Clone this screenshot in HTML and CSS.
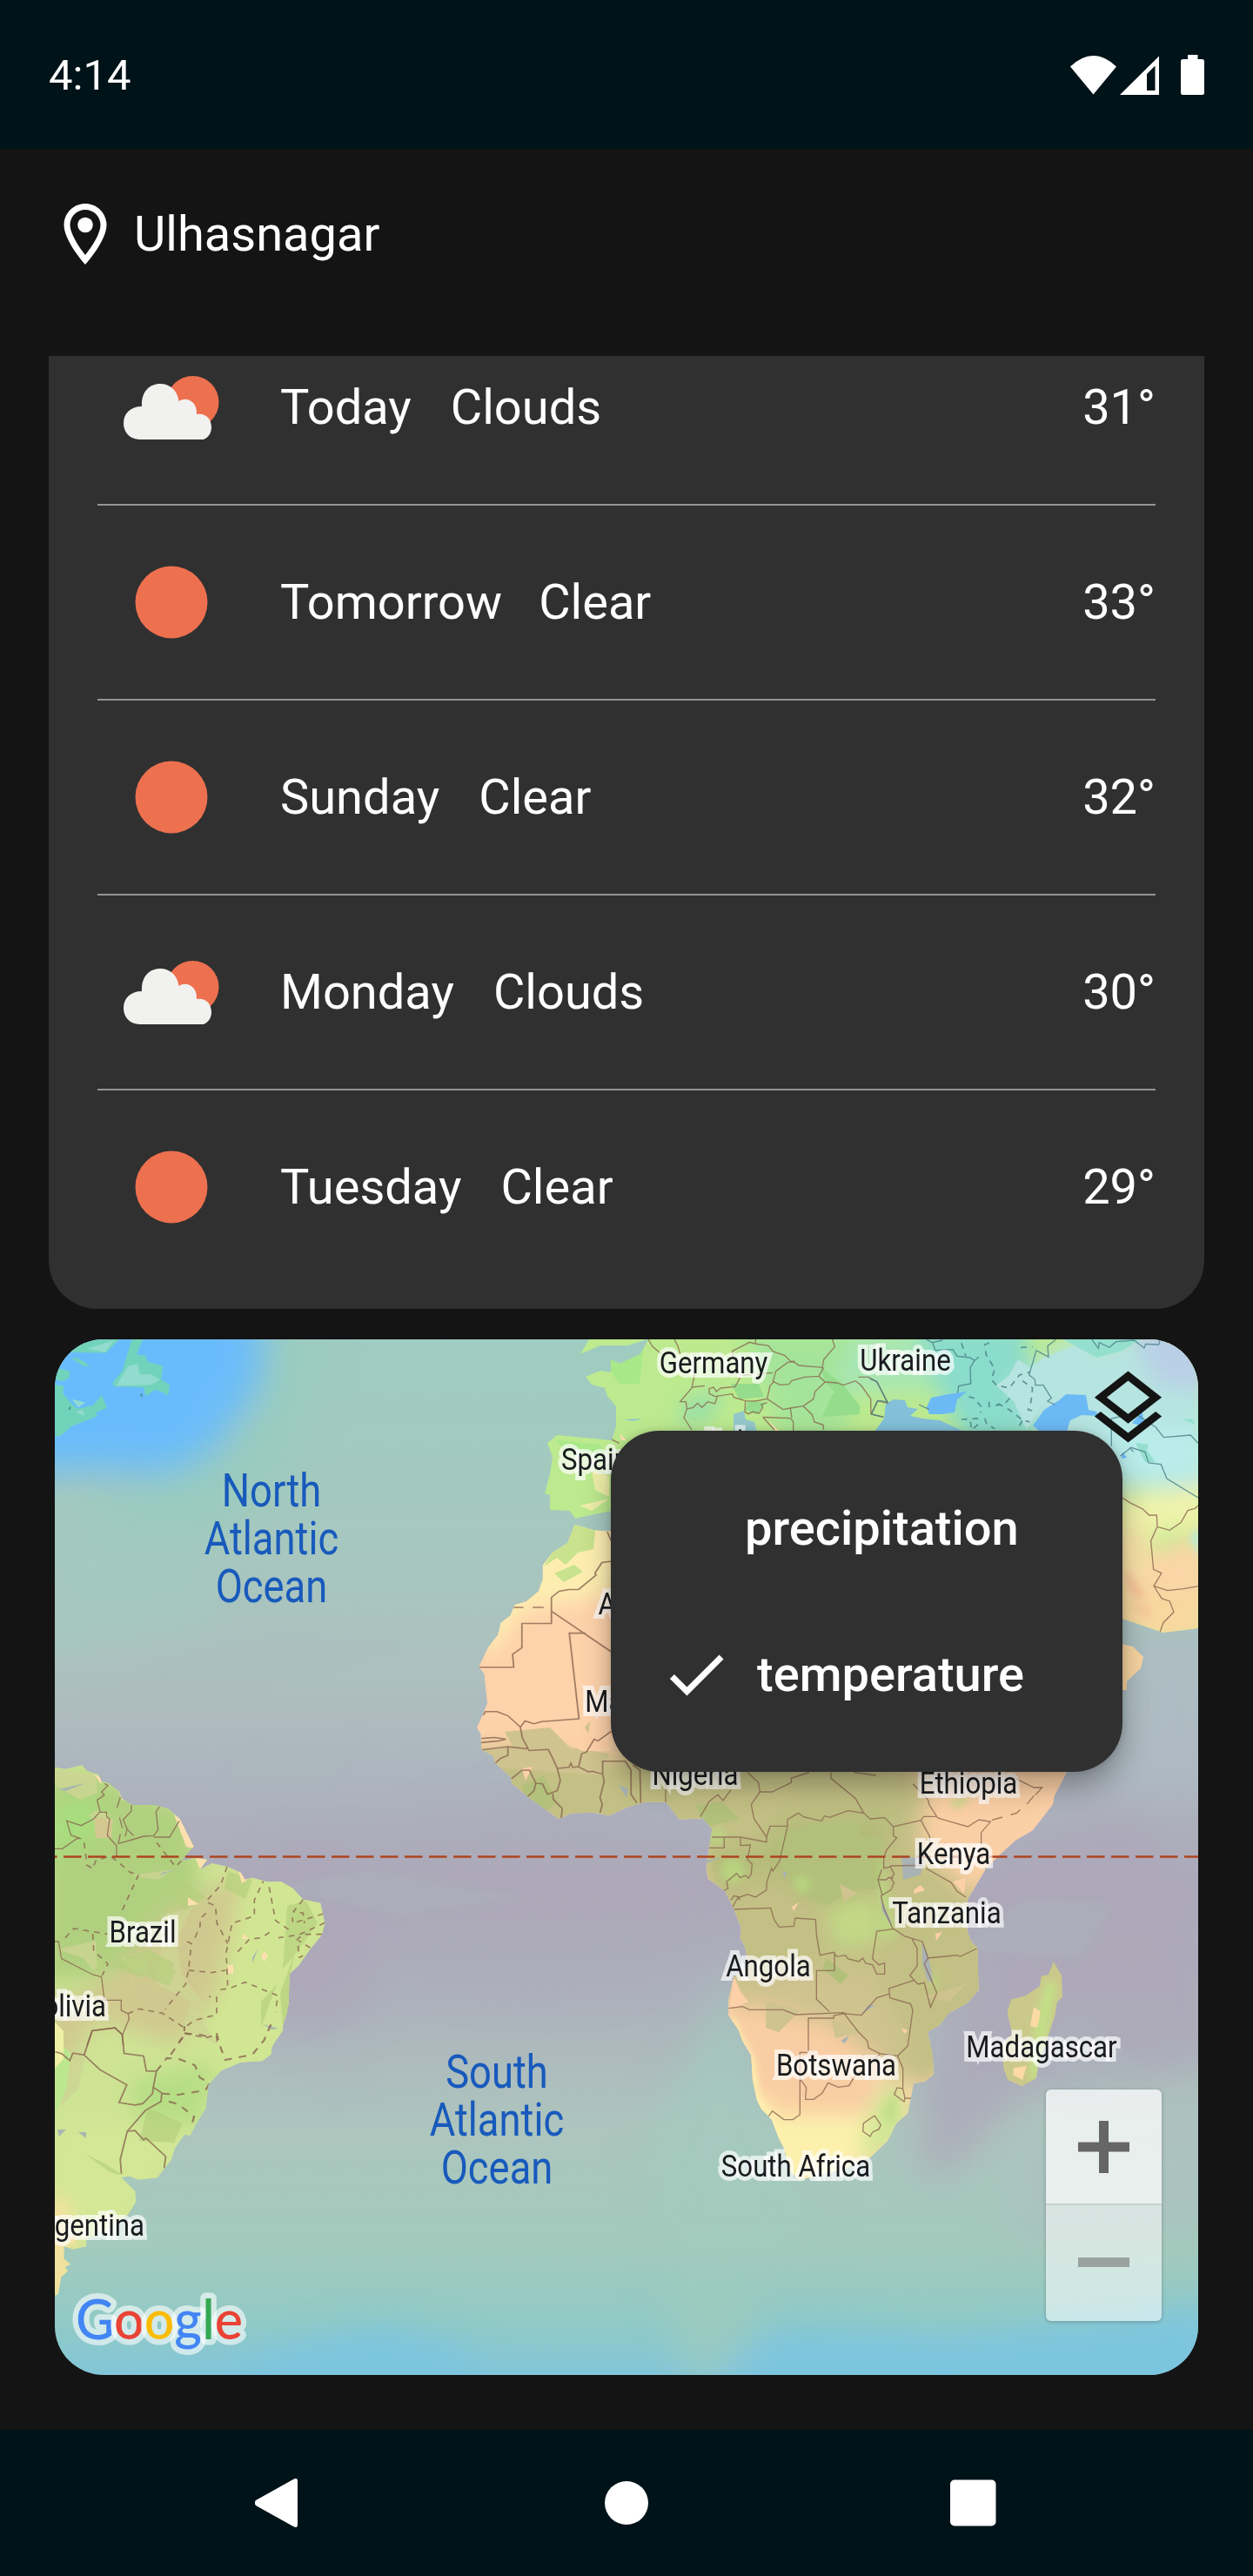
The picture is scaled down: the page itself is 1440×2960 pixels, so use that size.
FILE: index.html
```html
<!DOCTYPE html>
<html lang="en">
<head>
<meta charset="utf-8">
<title>Weather</title>
<link rel="stylesheet" href="styles.css">
</head>
<body>
<div class="screen">
  <header class="status-bar">
    <span class="clock">4:14</span>
    <svg class="status-icons" width="154" height="46" viewBox="1230 62 154 46">
      <path d="M1230 75.5Q1256.500 50.500 1283 75.500L1256.500 107.500Z"/>
      <path fill-rule="evenodd" d="M1287 108L1332 63.500V108ZM1318 84V103H1327.500V74.500Z"/>
      <path d="M1365 62H1376.500V67H1381.500Q1384 67 1384 69.500V105.500Q1384 108 1381.500 108H1359.500Q1357 108 1357 105.500V69.500Q1357 67 1359.500 67H1365Z"/>
    </svg>
  </header>

  <main class="content">
    <div class="location">
      <svg width="84" height="84" viewBox="0 0 24 24"><path d="M12 2C8.130 2 5 5.130 5 9c0 5.250 7 13 7 13s7-7.750 7-13c0-3.870-3.130-7-7-7zM7 9c0-2.760 2.240-5 5-5s5 2.240 5 5c0 2.880-2.880 7.190-5 9.880C9.920 16.210 7 11.850 7 9z"/><circle cx="12" cy="9" r="2.500"/></svg>
      <span>Ulhasnagar</span>
    </div>

    <section class="forecast">
      <ul class="days">
        <li class="day"><svg class="wx" viewBox="0 0 168 120"><use href="#cloudy"/></svg><span class="name wide">Today</span><span>Clouds</span><span class="temp">31°</span></li>
        <li class="day"><svg class="wx" viewBox="0 0 168 120"><use href="#sunny"/></svg><span class="name">Tomorrow</span><span>Clear</span><span class="temp">33°</span></li>
        <li class="day"><svg class="wx" viewBox="0 0 168 120"><use href="#sunny"/></svg><span class="name wide">Sunday</span><span>Clear</span><span class="temp">32°</span></li>
        <li class="day"><svg class="wx" viewBox="0 0 168 120"><use href="#cloudy"/></svg><span class="name wide">Monday</span><span>Clouds</span><span class="temp">30°</span></li>
        <li class="day"><svg class="wx" viewBox="0 0 168 120"><use href="#sunny"/></svg><span class="name wide">Tuesday</span><span>Clear</span><span class="temp">29°</span></li>
      </ul>
    </section>

    <section class="map-card">
      <svg class="map" viewBox="63 1539 1314 1190">
        <defs>
          <g id="sunny"><circle cx="85" cy="60" r="41.500" fill="#ed704f"/></g>
          <g id="cloudy">
            <circle cx="109.500" cy="54" r="30" fill="#ed704f"/>
            <path fill="#f1f1ef" d="M48 97C35 96 30 87 30 78.500C30 67 38 59 51 59C50 42 60 33 72 33C84 33 92 41 93.500 53C103 47 115 54 114 68C124 66 131 73 131 83C131 90 127 95 122 97Z"/>
          </g>
          <linearGradient id="sea" x1="0" y1="1539" x2="0" y2="2729" gradientUnits="userSpaceOnUse">
            <stop offset="0" stop-color="#9fccc0"/><stop offset=".18" stop-color="#a5c8bf"/><stop offset=".32" stop-color="#adc0bf"/>
            <stop offset=".42" stop-color="#adb5be"/><stop offset=".53" stop-color="#ada9ba"/><stop offset=".64" stop-color="#adb2bc"/>
            <stop offset=".76" stop-color="#adc5be"/><stop offset=".88" stop-color="#a2cabd"/><stop offset=".95" stop-color="#91cac6"/><stop offset="1" stop-color="#83c6d9"/>
          </linearGradient>
          <filter id="soft" x="-50%" y="-50%" width="200%" height="200%"><feGaussianBlur stdDeviation="22"/></filter>
          <filter id="mid" x="-50%" y="-50%" width="200%" height="200%"><feGaussianBlur stdDeviation="12"/></filter>
          <filter id="tight" x="-50%" y="-50%" width="200%" height="200%"><feGaussianBlur stdDeviation="4"/></filter>
          <clipPath id="africa">
            <path transform="translate(40 1520) scale(.4464 .3954)" d="M1390 587L1372 640 1332 668 1308 705V745L1297 780 1265 810 1235 820 1225 850 1200 872 1192 907 1168 942 1143 1000 1157 1020 1160 1055 1165 1105 1153 1140 1138 1176 1148 1195 1150 1240 1180 1258 1186 1280 1225 1320 1228 1338 1270 1378 1350 1442 1380 1425 1440 1423 1478 1432 1525 1408 1568 1393 1625 1393 1660 1443 1722 1440V620L1440 603Z"/>
            <path transform="translate(780 2030) scale(.3333)" d="M84 -100V177L115 215 105 280 95 350 100 385 160 430 190 490 215 555 212 590 230 625 240 690 190 725 172 800V858L205 905 220 945 250 995 255 1080 270 1150 285 1180 320 1215 345 1280 365 1320 380 1390 415 1425 500 1405 575 1385 660 1348 720 1290 750 1230 790 1195 810 1093 850 1085 880 1060 875 990 858 915 900 890 930 850 995 815 1034 770 1030 625 1010 605 995 570V460L1060 350 1100 310 1160 255 1220 220 1290 130 1295 100 1340 15V-100Z"/>
          </clipPath>
          <clipPath id="america">
            <path transform="translate(60 2010) scale(.3333)" d="M9 62L45 68 103 55 120 75 160 88 170 112 190 115 230 145 240 170 275 192H350L400 205 440 240 465 290 488 335 465 360 445 385 490 375 535 380 510 415 550 393 605 405 650 425 665 450 690 443 740 457H790L830 480 865 518 925 530 940 600 930 640 885 695 850 745 818 775 815 880 795 935V970L760 1020H9Z"/>
            <path transform="translate(40 2120) scale(.4464 .4082)" d="M52 200H400L650 365V470L635 520 610 570 608 590 585 608 530 612 480 635 447 675 440 742 415 785 400 818 385 815 360 855 352 885 315 937 265 942 245 932 222 935 258 975 260 1005 240 1040 200 1080 133 1110 132 1130 100 1138 75 1130V1165L92 1180 78 1188 85 1200 68 1215 60 1265 52 1268Z"/>
          </clipPath>
          <clipPath id="europe">
            <path d="M667 1556L677 1539H744L722 1546H690Z"/>
            <path d="M745 1539L736 1556 712 1567 702 1562V1577L690 1575 673 1582 680 1591 695 1595 698 1604 708 1616V1639L703 1655 640 1649 629 1658 635 1674 632 1694 626 1716 632 1718V1735L655 1736 661 1745 683 1740 710 1735V1860H1290L1337 1876 1377 1871V1539Z"/>
          </clipPath>
          <clipPath id="madagascar">
            <path transform="translate(780 2030) scale(.3333)" d="M1293 672L1308 700 1320 720 1323 795 1305 810 1297 860 1270 940 1240 1030 1232 1075 1183 1102 1135 1080 1120 1040 1115 960 1150 920 1133 850 1140 820 1148 802 1195 790 1245 757 1250 722 1275 717Z"/>
          </clipPath>
        </defs>

        <!-- ocean temperature -->
        <rect x="63" y="1539" width="1314" height="1190" fill="url(#sea)"/>
        <g filter="url(#soft)">
          <path fill="#69bcfb" d="M-20 1460H290Q315 1560 290 1610Q265 1630 250 1670Q225 1710 150 1690H-20Z"/>
          <path fill="#94cdbd" opacity=".6" d="M90 1740L280 1640 320 1520 370 1540 330 1700 200 1790 100 1800Z"/>
          <path fill="#a4c9bf" opacity=".8" d="M40 1740L260 1780 240 1860 40 1900Z"/>
          <path fill="#aebcc4" opacity=".7" d="M1290 1880H1400V2060H1280Z"/>
          <ellipse cx="360" cy="2230" rx="80" ry="110" fill="#ada8b9" opacity=".8"/>
          <ellipse cx="620" cy="2180" rx="220" ry="110" fill="#ada8b9" opacity=".4"/>
          <path fill="#ada7b9" opacity=".8" d="M1060 2400L1160 2140 1300 2080 1400 2250V2370L1180 2400 1090 2500 1060 2500Z"/>
          <path fill="#adc0be" opacity=".6" d="M1160 2480L1400 2400V2560L1160 2580Z"/>
          <path fill="#a2cbbd" opacity=".7" d="M840 2260L890 2440 950 2580 780 2600 740 2480Z"/>
          <path fill="#7cc5df" d="M170 2780L330 2700 440 2675 530 2700 560 2760 700 2750 760 2760 900 2680 1100 2690 1400 2650V2800H170Z"/>
          <path fill="#9dcbbd" opacity=".8" d="M760 2620L800 2760 870 2680 850 2600Z"/>
        </g>
        <g filter="url(#tight)" fill="#acbabe" opacity=".3">
          <path d="M80 1960L180 1920 320 1880 460 1890 300 1940Z"/><path d="M240 2060L300 2000 420 1990 380 2050Z"/>
          <path d="M300 2170L420 2150 600 2180 460 2200Z"/><path d="M320 2360L400 2330 440 2410 380 2430Z"/>
          <path d="M1100 2240L1180 2180 1280 2190 1240 2250Z"/><path d="M1190 2350L1240 2310 1320 2380 1250 2430Z"/>
        </g>

        <!-- Newfoundland and Nova Scotia -->
        <g transform="translate(40 1520) scale(.4464 .3954)">
          <path fill="#72d3bb" d="M72 85L95 48H218L183 87ZM250 48H278L262 92 285 95 290 113 330 125 325 165 347 180 343 212 325 200 310 195 285 213 280 187 205 185 200 175 225 140ZM90 100L115 105 143 127 125 125ZM52 130L90 140 88 160 70 170 52 165ZM52 180L75 183 72 205 95 235 110 250 150 240 172 210 186 248 155 262 163 270 95 300 65 330 52 330Z"/>
          <path fill="#92dccf" d="M135 75L205 50 180 86ZM240 125L265 120 270 150 300 150 322 165 300 180 210 183ZM95 222L130 232 112 245ZM105 260L122 252 128 270Z"/>
          <path d="M92 244L88 252M274 206L275 215" stroke="#4b8c86" stroke-width="4"/>
        </g>

        <!-- South America -->
        <g clip-path="url(#america)">
          <rect x="60" y="2020" width="330" height="640" fill="#cee394"/>
          <g filter="url(#mid)">
            <path fill="#b0d07f" d="M50 2040L110 2040 220 2080 230 2170 180 2260 50 2280Z"/>
            <path fill="#a8dd7e" d="M50 2080L100 2060 130 2100 60 2140Z"/>
            <path fill="#d0c98f" d="M190 2200L280 2150 280 2260 200 2350 110 2320 60 2400 50 2310 130 2270Z"/>
            <path fill="#d1e693" d="M280 2150H380L330 2380 230 2390Z"/>
            <path fill="#b5de85" d="M150 2390L250 2370 230 2440 160 2450Z"/>
            <path fill="#d3e796" d="M60 2440L220 2440 140 2570 60 2570Z"/>
            <path fill="#fae1a0" d="M50 2520L78 2530 84 2560 80 2650 50 2650Z"/>
          </g>
          <path fill="#cdd493" opacity=".8" d="M60 2032L110 2040 112 2060 92 2068 60 2050ZM120 2100L126 2084 145 2092 110 2080 102 2086ZM150 2155L200 2148 182 2160ZM66 2240L110 2230 112 2270 96 2250ZM140 2250L168 2252 172 2270 150 2262ZM190 2200L222 2190 202 2230 210 2270 240 2310 180 2280ZM220 2300L250 2350 210 2330ZM70 2360L100 2350 90 2400 70 2420Z"/>
          <path fill="#d3c890" d="M108 2088L130 2090 128 2112H110Z"/>
          <path fill="#b3cf7c" opacity=".65" d="M192 2168L212 2162 236 2180 212 2196ZM262 2150L290 2160 282 2182 258 2170ZM180 2260L202 2264 194 2282 170 2272ZM100 2270L170 2240 200 2256 195 2268 160 2272 120 2254ZM330 2190L352 2184 365 2210 340 2245 325 2262ZM340 2240L322 2290 326 2340 334 2300V2266ZM170 2422L210 2440 200 2462 160 2460ZM300 2300L318 2280 300 2330ZM98 2475L120 2486 142 2500 126 2496Z"/>
          <path fill="#fee0b0" d="M108 2038L118 2044 116 2050ZM136 2058L150 2070 140 2068ZM200 2085L210 2092 220 2115 224 2124 214 2122ZM274 2150L286 2159 278 2164ZM222 2128L238 2136 230 2148ZM262 2258H268V2268H262ZM304 2242L308 2248 304 2254 300 2248ZM216 2180L228 2188 216 2190ZM280 2222L286 2228 278 2228ZM329 2282L322 2290ZM80 2568L88 2572 82 2578Z"/>
          <path fill="#a8b7b0" d="M67 2056L98 2049 76 2058ZM297 2238L290 2250V2256ZM186 2152L202 2148 184 2155ZM66 2447H76L68 2455ZM90 2450H99V2457ZM302 2326L320 2331 312 2332Z"/>
          <path fill="#bde78f" d="M60 2340L82 2360 76 2400 64 2430Z"/><path fill="#eef0a5" d="M60 2320L73 2334V2366L60 2380Z"/>
          <g transform="translate(60 2010) scale(.3333)" class="border">
            <path d="M180 118L192 125 170 148 180 158 155 175 165 215 143 240 100 263 50 247 65 297 100 308 85 308 35 343H9M165 217H187L188 233 198 240 190 297 222 333V370M235 165L223 202M273 192V213L245 243 258 275 252 300M258 275L280 298M232 235L242 272M235 292L228 325 275 312 315 300 350 298 365 278 358 215 370 198M350 303H405L438 247M9 663L22 663 32 722 140 777 170 785 180 865H238V900L262 912 265 930 242 985 217 960 137 970 120 1020M242 985L245 1020"/>
            <path class="dash" d="M110 322L120 400 140 412 150 385 200 367 270 425 298 432 235 570M360 322L425 405 480 350M45 650L75 618 190 637M140 637L143 695 192 740 172 780M603 405L580 470 530 525 563 540 568 600 605 670M530 565L510 585V610L490 655M465 663L480 670 470 760 460 810 390 895M470 762L550 770 598 762M605 815L600 700 620 600 697 575V520L728 455M748 475L770 590 820 625M865 518L832 560 865 565 870 600M935 567L830 600 828 580M940 598L850 640 780 650M930 638H865L845 655 852 718 865 712M890 685L850 660M640 698L680 655 720 650 760 625M260 912L300 895 380 910 395 920 455 960 490 935 567 915V855L540 852M580 828L610 825 665 803 778 850 770 905M435 1012L460 980 530 995 565 985 570 1018"/>
          </g>
          <g transform="translate(40 2120) scale(.4464 .4082)" class="border">
            <path d="M52 582L70 588 90 607 98 586 127 591 148 523 206 515 225 533 230 587 280 594 287 636 313 637 305 682 327 698 325 722 285 747 238 806 220 885 223 925M127 591L168 633 237 675 217 725 258 732 278 728 303 700 305 682M238 806L258 804 280 830 286 825 337 877 333 910"/>
            <path class="dash" d="M313 637L340 600 370 602 412 620 425 655 450 670 440 690 370 703 327 700M345 722L370 730 410 765 405 785M350 590L385 535 385 510M468 530L475 560 490 605 560 590 590 550 610 500M385 530L430 535 450 542"/>
          </g>
        </g>

        <!-- Africa -->
        <g clip-path="url(#africa)">
          <rect x="540" y="1740" width="720" height="800" fill="#fed2ab"/>
          <g filter="url(#mid)">
            <path fill="#fdeeb0" d="M600 1740L720 1740V1830L600 1850 565 1900 540 1880Z"/>
            <path fill="#c3c085" d="M530 2012L600 2008 660 2020 700 2020 880 1990 1050 2030 1090 2110 1160 2180 1150 2340 1060 2400 1010 2370 960 2320 840 2310 800 2120 700 2120H560Z"/>
            <path fill="#b3bb79" d="M895 2090L1030 2080 1005 2170 950 2190 880 2150 820 2170 800 2130 880 2120Z"/>
            <path fill="#c2d986" d="M950 2190L1010 2180 1016 2230 960 2240Z"/>
            <path fill="#fbcfa5" d="M1060 2080L1180 2020 1260 2030 1180 2110 1120 2180 1060 2120Z"/>
            <path fill="#f9cda3" d="M830 2300L960 2320 1000 2350 1000 2440 900 2440 850 2400Z"/>
            <path fill="#fcf0ac" d="M855 2400L900 2430 1000 2430 990 2500 900 2520 870 2470Z"/>
            <path fill="#cee894" d="M1030 2390L1050 2440 1000 2490 990 2460 1010 2400Z"/>
            <path fill="#cfc38f" d="M860 2270L1000 2260 1050 2360 1010 2370 960 2330 840 2295Z"/>
          </g>
          <path filter="url(#tight)" fill="none" stroke="#fff4b0" stroke-width="9" d="M838 2320L850 2345 863 2370 868 2410 880 2430 895 2460"/>
          <path fill="#c8e28d" d="M660 1750L684 1758 682 1780 664 1784 650 1798 640 1790 625 1800 636 1782 650 1775ZM637 1808L660 1798 670 1806 648 1818Z"/>
          <path fill="#cfc38f" d="M580 1990L632 1985 655 2008 700 2015 690 2040 560 2030 552 2010 590 2008ZM672 1985L678 1978 676 1992Z"/>
          <path fill="#b3c07b" d="M600 2052L625 2040 640 2070 620 2088 605 2070ZM935 2095L985 2092 990 2110 1015 2112 1010 2170 975 2172 950 2190 925 2180 900 2150 895 2110ZM800 2075L830 2070 850 2090 810 2100ZM950 2250L975 2270 966 2280 945 2262Z"/>
          <path fill="#cfc38f" d="M965 2165L985 2175 970 2185ZM880 2300L920 2310 895 2335 880 2330ZM955 2320L990 2335 960 2342ZM1060 2295L1110 2280 1090 2300Z"/>
          <g filter="url(#tight)" fill="#b9dc82" opacity=".7"><circle cx="842" cy="2150" r="14"/><circle cx="824" cy="2110" r="10"/><circle cx="922" cy="2165" r="10"/><path d="M1010 2120L1020 2170 1030 2230 1010 2220ZM1070 2280L1080 2260 1078 2290ZM1090 2070L1120 2060 1100 2080ZM1030 2400L1012 2430 1030 2440Z"/></g>
          <path fill="#fdd0a8" d="M1050 2172L1058 2166 1063 2172 1050 2176ZM1075 2222L1083 2220 1076 2230ZM1035 2330L1043 2333 1040 2337ZM1095 2162L1110 2158 1108 2176ZM600 2032L612 2030 604 2046ZM650 1996L700 1998V2012L668 2012ZM910 2191L918 2186 912 2196ZM843 2270L852 2290 860 2300 838 2310Z"/>
          <path fill="#a9b3b4" d="M1036 2132L1062 2136 1058 2154 1038 2160ZM1060 2232L1066 2245 1070 2262 1072 2278 1066 2276 1060 2255ZM1012 2180L1024 2208 1026 2216 1014 2196ZM900 2150L904 2152 901 2160ZM966 2345L976 2339 971 2348ZM990 2314L1006 2304 998 2304ZM711 2051L722 2056 720 2066ZM807 2143L830 2134 812 2138Z"/>
          <g transform="translate(40 1520) scale(.4464 .3954)" class="border">
            <path d="M1474 607L1484 635M1484 693L1460 697 1442 728 1445 733 1400 775H1375L1350 780 1330 798V874H1254V944L1230 963 1233 1001H1143M1330 838L1484 956 1620 1060M1418 902H1376L1401 1151 1305 1159 1285 1165 1262 1157 1250 1175 1218 1142 1190 1130H1160L1155 1140M1250 1175L1255 1205 1270 1238 1218 1232 1150 1241M1148 1220L1195 1215 1213 1210 1183 1205 1150 1208M1218 1233V1257L1200 1265 1186 1279M1270 1243L1322 1240 1333 1265 1345 1295 1353 1330 1345 1360 1320 1370 1307 1340 1290 1338 1285 1360 1268 1377M1290 1338L1273 1300H1255L1227 1325M1345 1295L1375 1292 1380 1280 1385 1292 1400 1290 1408 1252 1420 1248 1440 1210 1450 1215 1484 1187M1400 1290L1425 1305 1435 1303 1462 1312V1274H1520L1535 1300V1370L1550 1395M1462 1312L1466 1332 1455 1380 1461 1400 1455 1424M1333 1365L1335 1385 1358 1412 1355 1442M1540 1285L1558 1300 1560 1395"/>
            <path d="M1230 827H1328" stroke-dasharray="28 24"/>
          </g>
          <g transform="translate(780 2030) scale(.3333)" class="border">
            <path d="M-65 -20L-45 60V175M75 172L105 120 135 97 153 117 180 80M238 20L275 55 280 87H322L388 55V40L450 20M280 87L250 130 260 180 303 243 315 205H375V182L413 160 430 173 492 187 503 170 520 175 583 152 638 160 660 180 710 176 740 207 835 185 845 172H887M525 20V40L610 110 638 160M605 20L680 30M105 280H157V245M115 243H213L303 260V243M213 247V272L247 270 237 320 253 335 250 370 240 385 230 375 212 383 200 368 165 397 170 420 155 427M375 205L348 325 325 360 320 350 303 400V425L265 450 237 440 210 450 190 445 180 460M185 485L205 450 212 460M190 492L317 487 330 530 347 553 397 550 402 522 472 527 475 580 487 650 535 640 545 655 575 650 583 662 620 672 635 660 645 678 668 683 683 715H710V677L690 683 668 662 683 567 740 560M537 642V703H475V802L520 845M740 207V238L752 245 717 287 707 315V350L730 345 743 370 732 385 742 400 732 425 702 443 687 390 700 355M690 390H715L725 382 740 385M730 342L835 340 940 400 960 430 990 450M697 443L708 490 737 557 780 585 840 603 860 660 847 680 890 780 868 830 847 745 825 750 797 720 822 687V627L805 595M860 660L960 650 970 655 1028 627M725 765L810 737M725 765L728 797 800 818 807 840 790 963 755 997 695 990 655 970 650 945 620 915 568 848 403 855 360 838H245L220 827 172 833M568 848L575 852 630 857 683 797 728 783M575 850L535 858V867H447V985H418V1200L393 1217H363L323 1187 310 1205M418 1075L440 1107 437 1147H465L495 1125 515 1090 550 1105 587 1100 605 1070 695 990M755 997L773 1040V1110L753 1107 743 1130 777 1155 780 1143H802M773 1110L780 1143M675 1203L637 1230 635 1257 660 1275 668 1260 690 1250 697 1235 675 1203M808 60L860 115 863 130 893 177 997 207 1035 183 1075 190 1043 227V270M835 185L865 240V265M1058 345L1060 362M1160 40L1225 72H1253L1230 98"/>
            <path d="M1225 100L1200 130 1165 160 1060 190" stroke-dasharray="38 30"/>
          </g>
        </g>
        <g clip-path="url(#madagascar)">
          <rect x="1140" y="2240" width="100" height="180" fill="#cbc88b"/>
          <path filter="url(#tight)" fill="#c3df87" d="M1203 2275L1215 2280 1205 2330 1192 2390 1182 2390 1190 2320Z"/>
          <path fill="#fbdaa4" d="M1188 2306L1196 2312 1192 2330 1184 2328ZM1165 2376L1180 2374 1175 2390 1164 2384Z"/>
        </g>

        <!-- Europe and western Asia -->
        <g clip-path="url(#europe)">
          <rect x="620" y="1530" width="760" height="420" fill="#bdea8f"/>
          <g filter="url(#mid)">
            <path fill="#a4e49a" d="M850 1530H990L970 1650H900L880 1600Z"/>
            <path fill="#a8e6b4" d="M980 1530H1080V1600L960 1600Z"/>
            <path fill="#8adccb" d="M1050 1520H1180L1190 1660H1110L1080 1600Z"/>
            <path fill="#b6e4e0" d="M1160 1590L1230 1540H1390V1710H1240Z"/>
            <path fill="#b9cfe6" d="M1290 1520H1390V1600L1330 1590Z"/>
            <path fill="#b9ecea" d="M1260 1640H1390V1695L1270 1710Z"/>
            <path fill="#eff3aa" d="M1270 1722L1390 1705V1755L1270 1770Z"/>
            <path fill="#fbe3a8" d="M1270 1760L1320 1755V1880H1270Z"/>
            <path fill="#fbd5a6" d="M1320 1785L1390 1760V1860H1300Z"/>
            <path fill="#f8d89f" d="M1270 1830H1390V1890H1270Z"/>
            <path fill="#8fdcae" d="M785 1610L830 1600 820 1625 785 1640Z"/>
          </g>
          <path fill="#95dc8c" d="M942 1570L968 1590 988 1615V1625L945 1628 955 1605 960 1600 950 1590ZM840 1590L872 1590 878 1605 850 1608ZM860 1610L880 1612 870 1625 856 1620Z"/>
          <path fill="#f8e4b0" d="M712 1647L720 1655 714 1655ZM882 1632L892 1645 900 1648Z"/>
          <path fill="#efefaa" d="M680 1690L700 1696V1720L684 1712ZM666 1730L700 1722 680 1736Z"/>
          <path fill="#a8e887" d="M690 1560L740 1545 735 1590 712 1590ZM640 1655L690 1660 700 1680 650 1670Z"/>
          <path fill="#b6e4e0" d="M1170 1562L1184 1572 1200 1560 1240 1545 1252 1560 1200 1610 1180 1643 1165 1610 1145 1592 1160 1580Z"/>
          <path fill="#95dfcf" d="M1222 1539H1310L1290 1552 1260 1560ZM1305 1658L1320 1660 1318 1666 1328 1680 1316 1680ZM1358 1630L1370 1631 1374 1637Z"/>
          <path filter="url(#tight)" fill="#b8ebd6" d="M1368 1765L1380 1755V1790L1370 1772Z"/>
          <path filter="url(#tight)" fill="#f8c49a" d="M1292 1800L1308 1820 1318 1835 1305 1838 1295 1825ZM1295 1845L1325 1848 1320 1858Z"/>
          <path fill="#83c0da" d="M1005 1645L1016 1630 1018 1613 1027 1608 1040 1609 1043 1617 1055 1619 1046 1627 1060 1630 1080 1632 1108 1645Z"/>
          <path fill="#6cbaf5" d="M1065 1617L1070 1606 1090 1602 1111 1599 1100 1608 1097 1623 1083 1625 1068 1625ZM1187 1638L1200 1620 1217 1609 1225 1602 1248 1603 1251 1620 1260 1622 1263 1627 1243 1626 1230 1632 1226 1645H1195ZM1301 1635L1313 1622 1315 1640ZM1290 1668L1295 1675 1289 1676Z"/>
          <path fill="#94c9cc" d="M843 1625L855 1621 857 1631 867 1634 870 1645H843ZM716 1631L739 1630 728 1633ZM1350 1708L1367 1725 1362 1720Z"/>
          <g transform="translate(660 1539) scale(.3333)" class="border">
            <path d="M255 0L270 25 300 50M345 0L358 25 365 50M545 40L605 10 622 15 670 22 685 42 725 55 745 75 760 80 775 90 855 97 860 70 898 25 890 0M625 0V15M545 40L548 60 560 80M760 75L735 80 695 110 685 145 710 157 740 155 750 142 795 130 843 127 860 97M843 127L865 147 905 150 928 158 970 143 990 160 1022 205 1023 258 1065 268M980 130H1015L1045 148 1080 220 1045 212 1023 258M865 147L830 180 825 205 790 230 745 237 720 242 665 205 675 160 690 145M665 205L625 213 590 212 550 200 545 188 485 197 465 187V170L480 165 490 180 505 168 555 163 575 125 685 115M405 165L450 160M415 120L405 168 365 215H385L388 240 410 235 425 220 440 235 460 215 485 222 493 197M388 240L378 270 405 312M590 212L588 250 600 257 615 250 637 255 650 235 645 225 665 218M650 268L745 272 755 283V315M650 268L690 312M745 237L750 270M790 230L820 260 828 285 858 295 860 312M125 343L155 358"/>
          </g>
          <g transform="translate(1000 1530) scale(.3333)" class="border cold">
            <path d="M195 28L215 38 225 65 285 62 300 85 345 90 360 100 345 125 347 180 305 188 302 212M215 38L250 30M0 163L22 172 60 243 27 238 5 285 47 295M360 100L375 88M640 28L612 50 615 88 573 65 548 150 568 165 570 185H597L625 230 612 240 637 252M765 28L787 58 790 38 825 55 848 35 910 30 945 57 950 43 995 45 1000 28M168 252L203 268M832 395V300L890 287 925 290 985 330 1012 365 1105 357 1131 385M862 430L900 400 948 415 960 453 1003 458 1023 507 1131 573M895 400L908 415"/>
            <path class="dash" d="M315 40L330 85M410 40L395 45 400 80 430 130 418 165 435 185 480 195 515 150 550 140M480 230L465 250 410 258 410 235M520 55L560 53M525 170L560 195 555 240 545 270 570 275M440 248L480 270 525 305 550 312M340 225L360 230 385 262 380 280M515 325L525 305M315 303L370 300 372 320 350 340 345 305M395 300L402 320 430 335"/>
          </g>
          <g transform="translate(1000 1530) scale(.3333)" class="border">
            <path d="M870 573L895 590 940 612 962 633H988L990 673 968 722 977 820 1005 833 978 877 1005 920 1033 930 1047 967 1010 1005 1000 1035M990 673L1033 685 1072 658 1095 617 1120 610 1131 600M978 877L1025 893 1080 887 1131 878"/>
          </g>
        </g>
        <path fill="#f9d5a0" d="M1285 1888L1302 1892 1314 1904 1311 1917 1295 1932V1942H1280Z"/>

        <path class="equator" d="M45 2133.500H1377"/>

        <g class="ocean">
          <text x="312" y="1731.500">North</text><text x="312" y="1786">Atlantic</text><text x="312" y="1841">Ocean</text>
          <text x="571" y="2399">South</text><text x="571" y="2454">Atlantic</text><text x="571" y="2509">Ocean</text>
        </g>
        <g class="country">
          <text x="820" y="1578.500">Germany</text>
          <text x="1040.500" y="1575">Ukraine</text>
          <text x="684" y="1689">Spain</text>
          <text x="840" y="1669">Italy</text>
          <text x="736" y="1855.500">Algeria</text>
          <text x="702" y="1967">Mali</text>
          <text x="799" y="2051">Nigeria</text>
          <text x="1113" y="2061">Ethiopia</text>
          <text x="1096" y="2142">Kenya</text>
          <text x="1088" y="2210.500">Tanzania</text>
          <text x="883" y="2271">Angola</text>
          <text x="961" y="2385">Botswana</text>
          <text x="914.500" y="2501">South Africa</text>
          <text x="1197" y="2364">Madagascar</text>
          <text x="164" y="2232">Brazil</text>
          <text x="76" y="2317">Bolivia</text>
          <text x="99" y="2569">Argentina</text>
        </g>
        <text class="brand" x="87" y="2688" textLength="192" lengthAdjust="spacingAndGlyphs"><tspan fill="#4285f4">G</tspan><tspan fill="#ea4335">o</tspan><tspan fill="#fbbc05">o</tspan><tspan fill="#4285f4">g</tspan><tspan fill="#34a853">l</tspan><tspan fill="#ea4335">e</tspan></text>
      </svg>

      <svg class="layers" viewBox="0 0 24 24"><path d="M11.990 18.540l-7.370-5.730L3 14.070l9 7 9-7-1.630-1.270-7.380 5.740zM12 16l7.360-5.730L21 9l-9-7-9 7 1.630 1.270L12 16zm0-11.470L17.740 9 12 13.470 6.260 9 12 4.530z"/></svg>

      <div class="zoom">
        <div class="zoom-in"><svg width="59" height="60" viewBox="0 0 59 60"><path d="M24 0H35V24.500H59V35.500H35V60H24V35.500H0V24.500H24Z"/></svg></div>
        <div class="zoom-out"><svg width="59" height="11" viewBox="0 0 59 11"><path d="M0 0H59V11H0Z"/></svg></div>
      </div>

      <div class="menu">
        <div class="item">precipitation</div>
        <div class="item checked"><svg width="84" height="84" viewBox="0 0 24 24"><path d="M9 16.170L4.830 12l-1.420 1.410L9 19 21 7l-1.410-1.410z"/></svg>temperature</div>
      </div>
    </section>
  </main>

  <nav class="nav-bar">
    <svg width="853" height="60" viewBox="293 2846 853 60">
      <path d="M294 2873L337 2849Q342 2846.500 342 2851V2901Q342 2905.500 337 2903L294 2879Q291.500 2876 294 2873Z"/>
      <circle cx="720" cy="2876" r="25"/>
      <rect x="1092" y="2849.500" width="52.500" height="53" rx="5"/>
    </svg>
  </nav>
</div>
</body>
</html>
```
FILE: styles.css
```css
* { box-sizing: border-box; }
body { margin: 0; background: #141414; font-family: Roboto, "Liberation Sans", sans-serif; color: #fff; }
svg { display: block; fill: currentColor; }
.screen { width: 1440px; height: 2960px; display: flex; flex-direction: column; }

.status-bar { height: 171px; flex: none; padding: 0 56px; display: flex; justify-content: space-between; align-items: center; background: #001319; }
.clock { font-size: 49px; line-height: 58px; margin-top: 3px; }

.content { flex: 1; display: flex; flex-direction: column; padding: 56px 56px 0; }
.location { display: flex; align-items: center; gap: 14px; height: 84px; margin-bottom: 98px; font-size: 56px; line-height: 66px; }

.forecast { height: 1095px; flex: none; overflow: hidden; background: #303030; border-radius: 0 0 56px 56px; padding: 0 56px; }
.days { list-style: none; margin: -52px 0 0; padding: 0; }
.day { height: 224px; display: flex; align-items: center; font-size: 56px; line-height: 66px; border-bottom: 2px solid #949494; }
.day:last-child { border-bottom: 0; padding-bottom: 2px; }
.wx { width: 168px; height: 120px; }
.name { margin: 0 42px; }
.name.wide { margin-right: 45px; }
.temp { margin-left: auto; }

.map-card { position: relative; height: 1190px; margin: 35px 7px 0; flex: none; }
.map { width: 1314px; height: 1190px; border-radius: 56px; }
.border { fill: none; stroke: #8a6750; stroke-width: 4; opacity: .8; }
.border.cold { stroke: #487f86; }
.dash { stroke-width: 5; stroke-dasharray: 20 18; }
.equator { fill: none; stroke: #ae4420; stroke-width: 2.5; stroke-dasharray: 20.500 7.500; }
.ocean text, .country text { text-anchor: middle; transform-box: fill-box; transform-origin: center; }
.ocean text { font-size: 54px; fill: #185abc; transform: scaleX(.84); }
.country text { font-size: 34.5px; fill: #191b1e; stroke: rgba(255, 255, 255, .68); stroke-width: 10px; paint-order: stroke; transform: scaleX(.905); }
.brand { font-family: Lato, sans-serif; font-size: 63px; font-weight: 500; stroke: rgba(255, 255, 255, .6); stroke-width: 13px; stroke-linejoin: round; paint-order: stroke; }

.layers { position: absolute; left: 1182px; top: 28px; width: 103px; height: 103px; color: #141414; }

.zoom { position: absolute; left: 1139px; top: 862px; width: 133px; height: 266px; border-radius: 6px; overflow: hidden; box-shadow: 0 1px 4px rgba(0, 0, 0, .25); display: flex; flex-direction: column; }
.zoom > div { flex: 1; display: flex; align-items: center; justify-content: center; }
.zoom-in { background: rgba(255, 255, 255, .73); color: #666; border-bottom: 2px solid #c8d2d0; }
.zoom > .zoom-out { background: rgba(255, 255, 255, .55); color: #9aa29f; padding-bottom: 2px; }

.menu { position: absolute; left: 639px; top: 105px; width: 588px; height: 392px; padding: 28px 0; border-radius: 56px; background: #303030; box-shadow: 0 16px 34px rgba(0, 0, 0, .3), 0 0 10px rgba(0, 0, 0, .15); }
.item { height: 168px; display: flex; align-items: center; gap: 28px; padding-left: 154px; font-size: 56px; font-weight: 500; }
.item.checked { padding-left: 56px; }

.nav-bar { height: 168px; flex: none; display: flex; align-items: center; padding-left: 293px; background: #001319; }
```
